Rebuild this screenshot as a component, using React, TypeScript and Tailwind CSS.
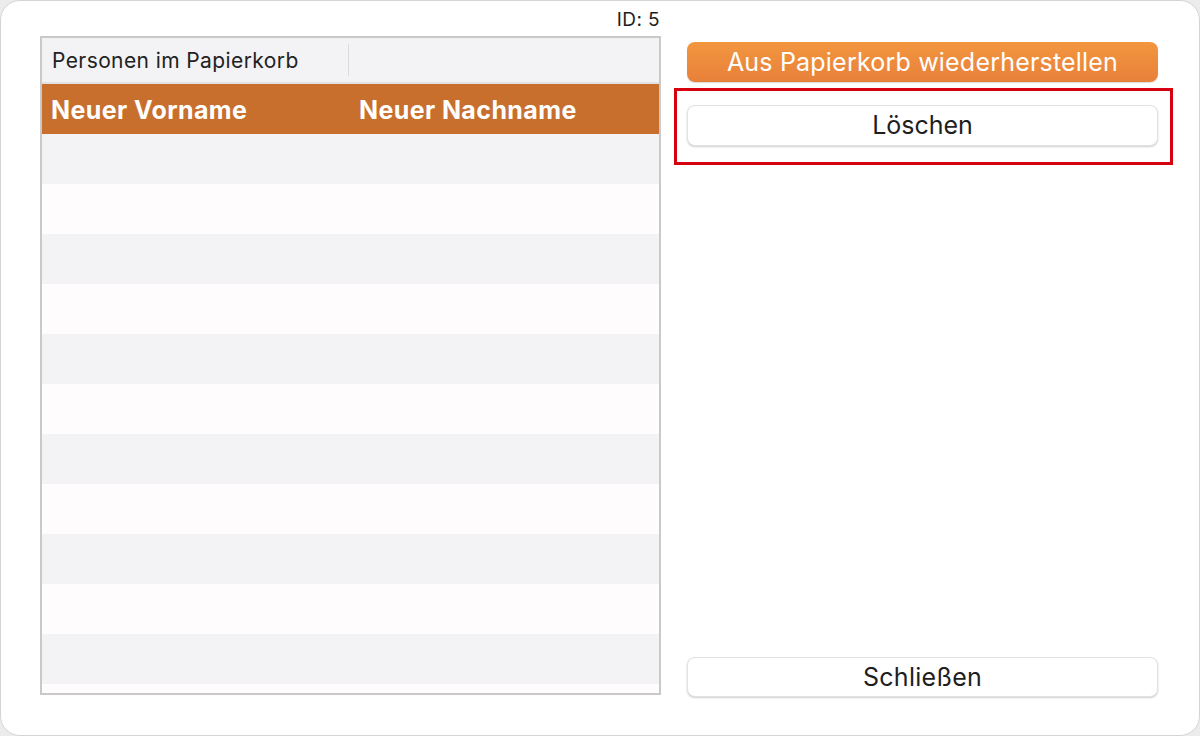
import React from 'react';

const rows = Array.from({ length: 12 });

export default function App() {
  return (
    <div className="w-[1200px] h-[736px] bg-[#ececec]" style={{ fontFamily: 'Inter, "Liberation Sans", Arial, sans-serif' }}>
      <div className="w-full h-full bg-white rounded-[20px] border border-[#d4d4d4] flex pl-[39px] overflow-hidden">
        {/* left: table */}
        <div className="w-[621px] shrink-0 flex flex-col">
          <div className="h-[35px] flex items-end justify-end pb-[7px] pr-[1px] text-[19px] tracking-[0.4px] text-[#1e1e1e] leading-none">ID: 5</div>
          <div className="h-[659px] border-2 border-[#c9c9c9] flex flex-col overflow-hidden">
            <div className="h-[46px] shrink-0 bg-[#f3f3f5] border-b-2 border-[#e2e2e4] flex items-center">
              <div className="w-[307px] pl-[10px] pt-[1px] text-[21px] tracking-[0.4px] text-[#222] border-r border-[#dcdcdc] h-[32px] flex items-center">Personen im Papierkorb</div>
            </div>
            <div className="h-[50px] shrink-0 bg-[#c96f2e] flex items-center pt-[3px] text-white font-bold text-[25px] tracking-[0.4px]">
              <div className="w-[317px] pl-[9px]">Neuer Vorname</div>
              <div>Neuer Nachname</div>
            </div>
            {rows.map((_, i) => (
              <div key={i} className={i % 2 === 0 ? 'h-[50px] shrink-0 bg-[#f3f3f5]' : 'h-[50px] shrink-0 bg-[#fffcfd]'} />
            ))}
          </div>
        </div>

        {/* right: buttons */}
        <div className="ml-[13px] w-[499px] shrink-0 flex flex-col pt-[41px] pb-[38px]">
          <button className="ml-[13px] w-[471px] h-[40px] rounded-[8px] bg-gradient-to-b from-[#f2963f] to-[#e8803a] text-white text-[25px] tracking-[0.2px] leading-none shadow-[0_1px_1px_rgba(0,0,0,0.15)]">
            Aus Papierkorb wiederherstellen
          </button>
          <div className="mt-[6px] h-[77px] border-[3px] border-[#d6000f] pl-[10px] pt-[14px]">
            <button className="w-[471px] h-[41px] rounded-[8px] bg-white border border-[#e2e2e2] shadow-[0_1px_2px_rgba(0,0,0,0.2)] text-[25px] text-[#1e1e1e] leading-none">
              Löschen
            </button>
          </div>
          <button className="mt-auto ml-[13px] w-[471px] h-[40px] rounded-[8px] bg-white border border-[#e2e2e2] shadow-[0_1px_2px_rgba(0,0,0,0.2)] text-[25px] tracking-[0.3px] text-[#1e1e1e] leading-none">
            Schließen
          </button>
        </div>
      </div>
    </div>
  );
}
